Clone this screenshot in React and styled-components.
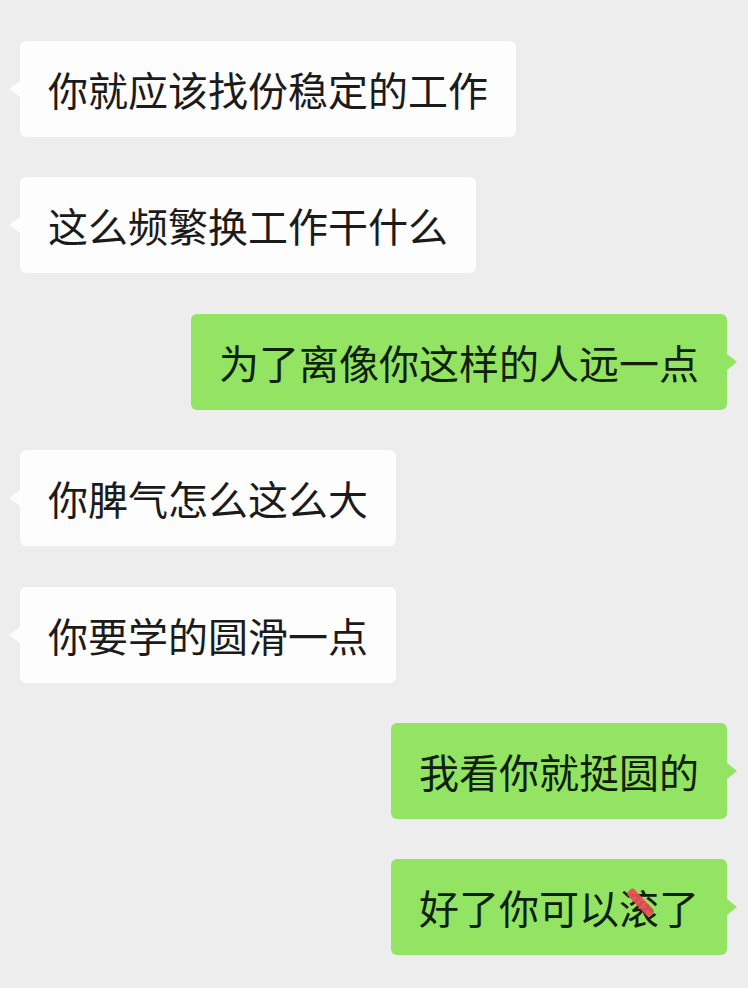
import styled, { createGlobalStyle, css } from "styled-components"

const GlobalStyle = createGlobalStyle`
    html, body {
        margin: 0;
        padding: 0;
        background: #ededed;
    }
`

const Chat = styled.div`
    width: 748px;
    height: 988px;
    box-sizing: border-box;
    padding: 41px 21px 0 20px;
    display: flex;
    flex-direction: column;
    gap: 40.4px;
    background: #ededed;
    font-family: "Noto Sans CJK SC", "Noto Sans", sans-serif;
    overflow: hidden;
`

const Row = styled.div`
    display: flex;
    justify-content: ${p => (p.$mine ? "flex-end" : "flex-start")};
`

const Bubble = styled.div`
    position: relative;
    height: 96px;
    box-sizing: border-box;
    padding: 0 28px;
    display: flex;
    align-items: center;
    border-radius: 6px;
    font-size: 40px;
    white-space: nowrap;
    background: ${p => (p.$mine ? "#92e462" : "#fdfdfd")};
    color: ${p => (p.$mine ? "#10200a" : "#1b1b1b")};

    &::before {
        content: "";
        position: absolute;
        top: 50%;
        margin-top: -8px;
        border-top: 8px solid transparent;
        border-bottom: 8px solid transparent;
        ${p => p.$mine
            ? css`
                right: -10px;
                border-left: 10px solid #92e462;
            `
            : css`
                left: -11px;
                border-right: 11px solid #fdfdfd;
            `}
    }
`

// red scribble over one character
const Marked = styled.span`
    position: relative;

    &::after {
        content: "";
        position: absolute;
        left: 5px;
        top: 20px;
        width: 33px;
        height: 9px;
        border-radius: 3px;
        background: rgba(232, 78, 86, 0.92);
        transform: rotate(47deg);
    }
`

const messages = [
    { mine: false, text: "你就应该找份稳定的工作" },
    { mine: false, text: "这么频繁换工作干什么" },
    { mine: true, text: "为了离像你这样的人远一点" },
    { mine: false, text: "你脾气怎么这么大" },
    { mine: false, text: "你要学的圆滑一点" },
    { mine: true, text: "我看你就挺圆的" },
]

export default function App() {
    return (
        <>
            <GlobalStyle />
            <Chat>
                {messages.map((m, i) => (
                    <Row key={i} $mine={m.mine}>
                        <Bubble $mine={m.mine}>{m.text}</Bubble>
                    </Row>
                ))}
                <Row $mine>
                    <Bubble $mine>
                        好了你可以<Marked>滚</Marked>了
                    </Bubble>
                </Row>
            </Chat>
        </>
    )
}
